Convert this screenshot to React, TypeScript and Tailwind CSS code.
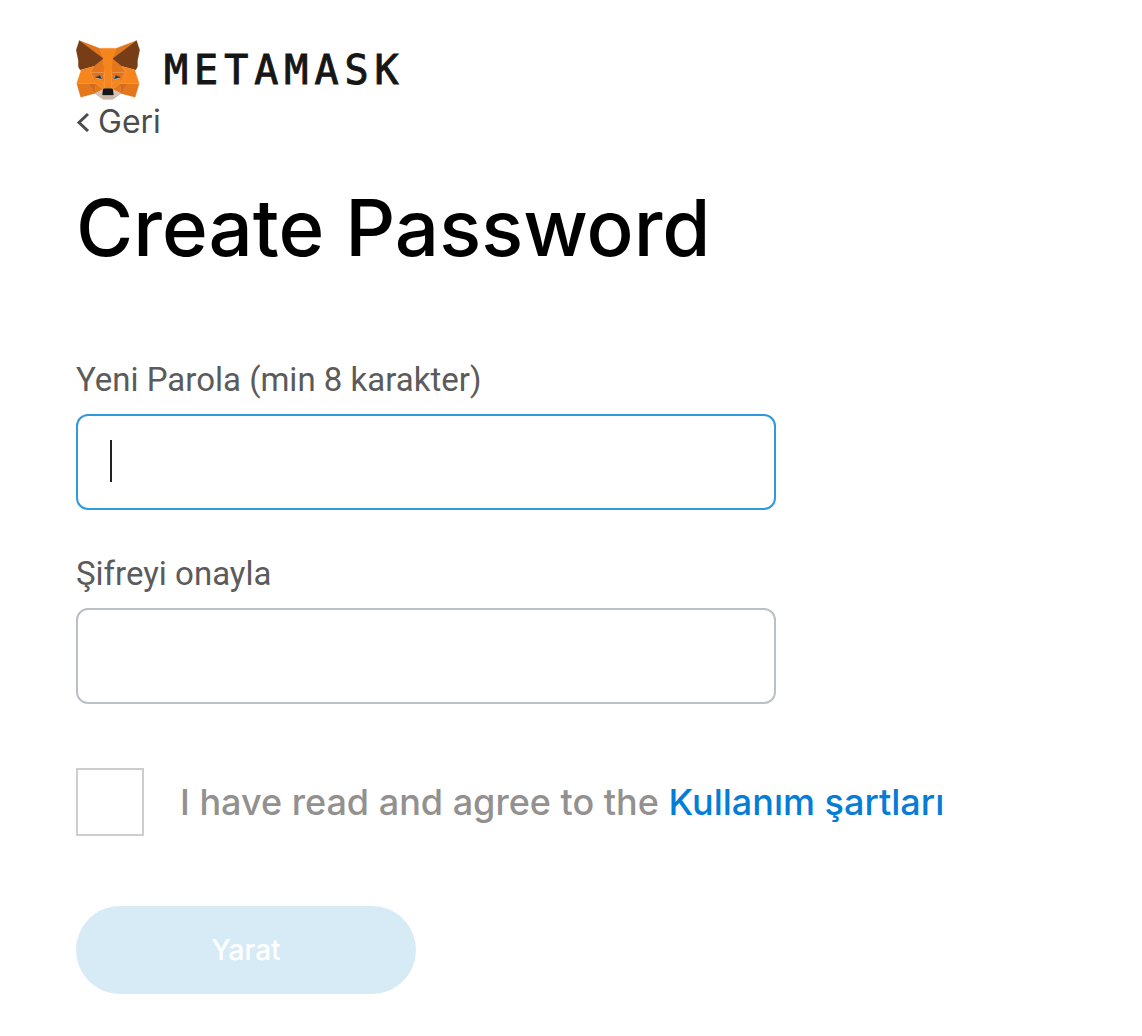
const foxShapes = [
  { fill: "#e2761b", points: "274.1,35.5 174.6,109.4 193,65.8" },
  { fill: "#e2761b", points: "44.4,35.5 143.1,110.1 125.6,65.8" },
  { fill: "#e4761b", points: "238.3,206.8 211.8,247.4 268.5,263 284.8,207.7" },
  { fill: "#e4761b", points: "33.9,207.7 50.1,263 106.8,247.4 80.3,206.8" },
  { fill: "#e4761b", points: "103.6,138.2 87.8,162.1 144.1,164.6 142.1,104.1" },
  { fill: "#e4761b", points: "214.9,138.2 175.9,103.4 174.6,164.6 230.8,162.1" },
  { fill: "#e4761b", points: "106.8,247.4 140.6,230.9 111.4,208.1" },
  { fill: "#e4761b", points: "177.9,230.9 211.8,247.4 207.1,208.1" },
  { fill: "#d7c1b3", points: "211.8,247.4 177.9,230.9 180.6,253 180.3,262.3" },
  { fill: "#d7c1b3", points: "106.8,247.4 138.3,262.3 138.1,253 140.6,230.9" },
  { fill: "#d5681a", points: "106.8,247.4 111.6,206.8 80.3,207.7" },
  { fill: "#d5681a", points: "207,206.8 211.8,247.4 238.3,207.7" },
  { fill: "#e07019", points: "230.8,162.1 174.6,164.6 179.8,193.5 188.1,176.1 208.1,185.2" },
  { fill: "#e07019", points: "110.6,185.2 130.6,176.1 138.8,193.5 144.1,164.6 87.8,162.1" },
  { fill: "#e4751f", points: "87.8,162.1 111.4,208.1 110.6,185.2" },
  { fill: "#e4751f", points: "208.1,185.2 207.1,208.1 230.8,162.1" },
  { fill: "#e4751f", points: "144.1,164.6 138.8,193.5 145.4,227.6 146.9,182.7" },
  { fill: "#e4751f", points: "174.6,164.6 171.9,182.6 173.1,227.6 179.8,193.5" },
  { fill: "#f6851b", points: "179.8,193.5 173.1,227.6 177.9,230.9 207.1,208.1 208.1,185.2" },
  { fill: "#f6851b", points: "110.6,185.2 111.4,208.1 140.6,230.9 145.4,227.6 138.8,193.5" },
  {
    fill: "#cbb5a7",
    points:
      "180.3,262.3 180.6,253 178.1,250.8 140.4,250.8 138.1,253 138.3,262.3 106.8,247.4 117.8,256.4 140.1,271.9 178.4,271.9 200.8,256.4 211.8,247.4",
  },
  { fill: "#763d16", points: "278.3,114.2 286.8,73.4 274.1,35.5 177.9,106.9 214.9,138.2 271,153.5 278,140" },
  { fill: "#763d16", points: "31.8,73.4 40.3,114.2 40.6,140 47.6,153.5 103.6,138.2 140.6,106.9 44.4,35.5" },
  { fill: "#f6851b", points: "267.2,153.5 214.9,138.2 230.8,162.1 207.1,208.1 238.3,207.7 284.8,207.7" },
  { fill: "#f6851b", points: "103.6,138.2 51.3,153.5 33.9,207.7 80.3,207.7 111.4,208.1 87.8,162.1" },
  {
    fill: "#f6851b",
    points:
      "174.6,164.6 177.9,106.9 193.1,65.8 125.6,65.8 140.6,106.9 144.1,164.6 145.3,182.8 145.4,227.6 173.1,227.6 173.3,182.8",
  },
  { fill: "#161616", points: "178.9,230.9 174.1,227.6 144.4,227.6 139.6,230.9 137.1,254 181.6,254" },
  { fill: "#233447", points: "136,191 109,183 128,176" },
  { fill: "#233447", points: "182.6,191 190.6,176 209.6,183" },
];

const FoxLogo = () => (
  <svg viewBox="31 35 257 237" className="h-[60px] w-16" aria-hidden="true">
    {foxShapes.map((shape, index) => (
      <polygon
        key={index}
        fill={shape.fill}
        stroke={shape.fill}
        strokeWidth="1"
        strokeLinejoin="round"
        points={shape.points}
      />
    ))}
    {/* Seams between the facets */}
    <path
      d="M34 208h77M285 208h-77M88 162l56 2.500M231 162l-56 2.500M145 165v62M173.500 165v62"
      fill="none"
      stroke="#f3a35c"
      strokeWidth="2"
    />
  </svg>
);

const App = () => {
  return (
    <main className="min-h-screen bg-white px-[76px] pt-10 pb-10 font-['Inter',sans-serif]">
      {/* Logo */}
      <header className="flex items-center gap-6">
        <FoxLogo />
        <span className="font-['DejaVu_Sans_Mono',monospace] text-[40px] leading-[60px] tracking-[6px] text-[#161616] [-webkit-text-stroke:1px]">
          METAMASK
        </span>
      </header>

      <a href="#back" className="inline-flex h-11 items-center gap-2 text-[32px] leading-10 text-[#4d4d4d]">
        <svg viewBox="0 0 14 20" className="h-5 w-3.5" fill="none" stroke="currentColor" strokeWidth="3" aria-hidden="true">
          <path d="M12 2 3 10.5 12 19" />
        </svg>
        Geri
      </a>

      <h1 className="mt-9 text-[78px] leading-[96px] font-medium text-black">Create Password</h1>

      <form className="mt-[84px]">
        {/* New password */}
        <div>
          <label htmlFor="new-password" className="block font-['Roboto',sans-serif] text-[33px] leading-10 text-[#5b5b5b]">
            Yeni Parola (min 8 karakter)
          </label>
          <div className="relative mt-3.5 max-w-[700px]">
            <input
              id="new-password"
              type="password"
              className="block h-24 w-full rounded-xl border-2 border-[#3098dc] px-8 text-[32px] caret-transparent outline-none"
            />
            <span className="absolute top-[26px] left-[34px] h-[42px] w-0.5 bg-[#222]" />
          </div>
        </div>

        {/* Confirm password */}
        <div className="mt-11">
          <label htmlFor="confirm-password" className="block font-['Roboto',sans-serif] text-[33px] leading-10 text-[#5b5b5b]">
            Şifreyi onayla
          </label>
          <input
            id="confirm-password"
            type="password"
            className="mt-3.5 block h-24 w-full max-w-[700px] rounded-xl border-2 border-[#bbc0c5] px-8 text-[32px] outline-none"
          />
        </div>

        {/* Terms */}
        <div className="mt-16 flex items-center gap-9">
          <input
            id="terms"
            type="checkbox"
            className="size-[68px] shrink-0 appearance-none border-2 border-[#cdcdcd] bg-white checked:bg-[#3098dc]"
          />
          <label htmlFor="terms" className="text-[36px] leading-[48px] font-medium text-[#939090]">
            I have read and agree to the{" "}
            <a href="#terms-of-use" className="text-[#037dd6]">
              Kullanım şartları
            </a>
          </label>
        </div>

        <button
          type="submit"
          disabled
          className="mt-[70px] h-[88px] w-[340px] rounded-full bg-[#d7ebf7] text-[28px] font-medium text-white"
        >
          Yarat
        </button>
      </form>
    </main>
  );
};

export default App;
